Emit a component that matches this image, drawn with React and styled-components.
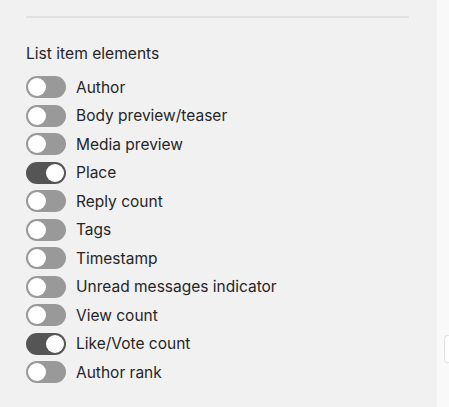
import styled, { createGlobalStyle } from "styled-components";

const GlobalStyle = createGlobalStyle`
  html, body {
    margin: 0;
    padding: 0;
    background: #f9f9f9;
    font-family: Inter, "Noto Sans", sans-serif;
  }
`;

const Page = styled.div`
  display: flex;
  height: 407px;
  overflow: hidden;
`;

const Panel = styled.div`
  background: #f1f1f1;
  width: 437px;
  padding: 16px 28px 0 26px;
  box-sizing: border-box;
`;

const Side = styled.div`
  flex: 1;
  display: flex;
  flex-direction: column;
  padding-top: 335px;
  align-items: flex-end;
`;

const SideTab = styled.div`
  width: 4px;
  height: 26px;
  border: 1px solid #e2e2e2;
  border-right: none;
  border-radius: 4px 0 0 4px;
  background: #ffffff;
`;

const Hr = styled.div`
  height: 2px;
  background: #e1e1e1;
`;

const Heading = styled.h3`
  margin: 27px 0 13px;
  font-size: 15.6px;
  font-weight: 400;
  color: #262626;
  line-height: 18px;
`;

const List = styled.div`
  display: flex;
  flex-direction: column;
  gap: 6.5px;
`;

const Row = styled.label`
  display: flex;
  align-items: center;
  gap: 10px;
  height: 22px;
  font-size: 15.5px;
  color: #262626;
`;

const Switch = styled.span`
  position: relative;
  width: 40px;
  height: 22px;
  border-radius: 11px;
  background: ${(props) => (props.on ? "#555555" : "#999999")};
  flex-shrink: 0;

  &::after {
    content: "";
    position: absolute;
    top: 2px;
    left: ${(props) => (props.on ? "20px" : "2px")};
    width: 18px;
    height: 18px;
    border-radius: 50%;
    background: #ffffff;
  }
`;

const items = [
  ["Author", false],
  ["Body preview/teaser", false],
  ["Media preview", false],
  ["Place", true],
  ["Reply count", false],
  ["Tags", false],
  ["Timestamp", false],
  ["Unread messages indicator", false],
  ["View count", false],
  ["Like/Vote count", true],
  ["Author rank", false],
];

const App = () => {
  return (
    <Page>
      <GlobalStyle />
      <Panel>
        <Hr />
        <Heading>List item elements</Heading>
        <List>
          {items.map(([label, on]) => (
            <Row key={label}>
              <Switch on={on} />
              {label}
            </Row>
          ))}
        </List>
      </Panel>
      <Side>
        <SideTab />
      </Side>
    </Page>
  );
};

export default App;
